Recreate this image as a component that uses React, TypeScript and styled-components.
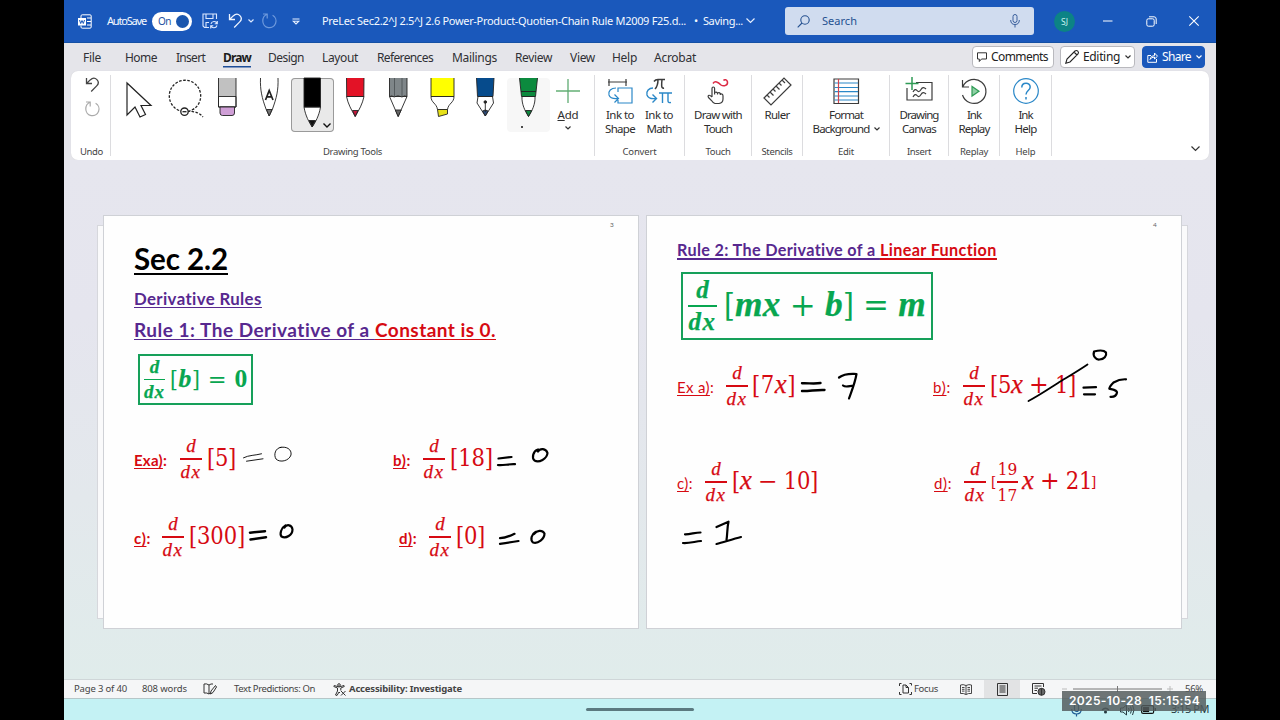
import React, { useLayoutEffect, useRef, useState } from "react";
import styled, { createGlobalStyle } from "styled-components";

const UI = `"Noto Sans", "Open Sans", sans-serif`;
const BODY = `Lato, "Open Sans", sans-serif`;
const MATH = `"Liberation Serif", serif`;
const FIGURES = `"DejaVu Serif Condensed", "DejaVu Serif", serif`;

const Global = createGlobalStyle`
  * { box-sizing: border-box; }
  body { margin: 0; background: #000; overflow: hidden; font-family: ${UI}; color: #2b2b2b; }
  svg { display: block; flex: none; overflow: visible; }
`;

/* ---------- text that spreads evenly over a given width ---------- */

const FitText = styled.span<{ $w: number }>`
  display: block;
  flex: none;
  width: ${(p) => p.$w}px;
  white-space: pre;
`;

function Fit({ w, children, className }: { w: number; children: React.ReactNode; className?: string }) {
  const ref = useRef<HTMLSpanElement>(null);
  const [spacing, setSpacing] = useState(0);
  useLayoutEffect(() => {
    const el = ref.current;
    if (!el) return;
    const n = (el.textContent || "").length;
    setSpacing((w - el.getBoundingClientRect().width) / Math.max(1, n));
  }, [w]);
  return (
    <FitText $w={w} className={className}>
      <span ref={ref} style={{ letterSpacing: spacing }}>
        {children}
      </span>
    </FitText>
  );
}

/* ---------- frame ---------- */

const Screen = styled.div`
  width: 1280px;
  height: 720px;
  padding: 0 64px;
  background: #000;
`;
const Window = styled.div`
  height: 720px;
  display: flex;
  flex-direction: column;
  background: #e5e5ea;
  overflow: hidden;
`;
const Slot = styled.div<{ $ml?: number; $mt?: number }>`
  flex: none;
  margin-left: ${(p) => p.$ml || 0}px;
  margin-top: ${(p) => p.$mt || 0}px;
`;

/* ---------- title bar ---------- */

const TitleBar = styled.header`
  height: 43px;
  flex: none;
  display: flex;
  align-items: center;
  background: #1a58bb;
  border-bottom: 1px solid #1450a4;
  color: #f4f8ff;
  font-size: 11px;
  line-height: 16px;
`;
const Toggle = styled.div`
  width: 40px;
  height: 19px;
  margin-left: 6px;
  border-radius: 10px;
  background: #fff;
  color: #1a4f9f;
  display: flex;
  align-items: center;
  justify-content: space-between;
  padding: 0 3px 0 6px;
  font-size: 10px;
`;
const Knob = styled.i`
  width: 13px;
  height: 13px;
  border-radius: 50%;
  background: #1a56ae;
`;
const SearchBox = styled.div`
  width: 249px;
  height: 28px;
  margin-left: 30px;
  border-radius: 3px;
  background: #d0dcef;
  color: #24508f;
  display: flex;
  align-items: center;
  padding: 0 14px 0 12px;
`;
const Avatar = styled.div`
  width: 21px;
  height: 21px;
  margin-left: 20px;
  border-radius: 50%;
  background: #0c8385;
  color: #c8f2ee;
  font-size: 8.5px;
  line-height: 21px;
  text-align: center;
`;

/* ---------- tabs ---------- */

const TabRow = styled.nav`
  height: 28px;
  flex: none;
  display: flex;
  align-items: center;
  padding-left: 19px;
  font-size: 12px;
  line-height: 18px;
  color: #303034;
`;
const Tab = styled.div<{ $ml: number; $active?: boolean }>`
  margin-left: ${(p) => p.$ml}px;
  height: 17px;
  font-weight: ${(p) => (p.$active ? 700 : 400)};
  color: ${(p) => (p.$active ? "#1c1c1c" : "inherit")};
  box-shadow: ${(p) => (p.$active ? "0 1.5px 0 #1c4c97" : "none")};
`;
const Pill = styled.div<{ $w: number; $ml: number; $primary?: boolean }>`
  width: ${(p) => p.$w}px;
  height: 22px;
  margin-left: ${(p) => p.$ml}px;
  display: flex;
  align-items: center;
  gap: 4px;
  padding: 0 4px;
  border-radius: 4px;
  border: 1px solid ${(p) => (p.$primary ? "#1a58bb" : "#b9b9be")};
  background: ${(p) => (p.$primary ? "#1a58bb" : "#fff")};
  color: ${(p) => (p.$primary ? "#fff" : "#222")};
`;

/* ---------- ribbon ---------- */

const Ribbon = styled.section`
  height: 89px;
  flex: none;
  margin: 0 7px;
  border-radius: 7px;
  background: #fff;
  display: flex;
  box-shadow: 0 0 1px #c9c9d0;
`;
const Group = styled.div<{ $w: number }>`
  width: ${(p) => p.$w}px;
  height: 81px;
  margin-top: 4px;
  flex: none;
  display: flex;
  flex-direction: column;
  justify-content: space-between;
  border-right: 1px solid #dcdcdf;
`;
const GroupBody = styled.div`
  display: flex;
  justify-content: center;
  padding-top: 3px;
`;
const GroupName = styled.div`
  display: flex;
  justify-content: center;
  height: 13px;
  margin-bottom: -2px;
  font-size: 9.5px;
  line-height: 13px;
  color: #444;
`;
const Tools = styled.div`
  display: flex;
  padding: 3px 0 0 7px;
`;
const Tool = styled.div<{ $w?: number; $state?: "selected" | "hover" }>`
  position: relative;
  width: ${(p) => p.$w || 43}px;
  height: 54px;
  flex: none;
  display: flex;
  justify-content: center;
  border-radius: 4px;
  background: ${(p) => (p.$state === "selected" ? "#e9e9e9" : p.$state === "hover" ? "#f7f7f7" : "none")};
  box-shadow: ${(p) => (p.$state === "selected" ? "inset 0 0 0 1px #9a9a9a" : "none")};
`;
/* small marks laid over the lower corner of a pen */
const ToolMark = styled.div<{ $left: number; $top: number }>`
  position: absolute;
  left: ${(p) => p.$left}px;
  top: ${(p) => p.$top}px;
`;
const Dot = styled.i`
  display: block;
  width: 2px;
  height: 2px;
  border-radius: 50%;
  background: #111;
`;
const RButton = styled.div<{ $w: number }>`
  width: ${(p) => p.$w}px;
  flex: none;
  display: flex;
  flex-direction: column;
  align-items: center;
  font-size: 11.5px;
  line-height: 14px;
  color: #2e2e2e;
`;
const Caption = styled.div`
  display: flex;
  flex-direction: column;
  align-items: center;
  margin-top: 4px;
`;
const CaptionLine = styled.div`
  display: flex;
  align-items: center;
  gap: 4px;
`;
const RibbonEnd = styled.div`
  flex: 1;
  display: flex;
  justify-content: flex-end;
  align-items: flex-end;
  padding: 0 9px 9px 0;
`;

/* ---------- document ---------- */

const Workspace = styled.main`
  height: 519px;
  flex: none;
  position: relative;
  display: flex;
  padding: 56px 0 0 34px;
  background: linear-gradient(180deg, #e6e6ee 0%, #e5e5ee 30%, #e3e8ec 65%, #e0eceb 100%);
`;
const Edge = styled.div`
  width: 6px;
  height: 392px;
  margin-top: 10px;
  background: #fafafb;
  box-shadow: 0 0 0 1px #d6d7dc;
`;
const Page = styled.article<{ $ml?: number }>`
  position: relative;
  width: 534px;
  height: 412px;
  margin-left: ${(p) => p.$ml || 0}px;
  padding-left: 30px;
  background: #fefefe;
  box-shadow: 0 0 0 1px #cfd1d6;
`;
const PageNo = styled.div`
  height: 10px;
  padding: 5px 0 0 476px;
  font: 6.5px/8px ${BODY};
  color: #666;
`;
const Heading = styled.div<{ $size: number; $lh: number; $mt: number; $line: number }>`
  display: flex;
  margin-top: ${(p) => p.$mt}px;
  height: ${(p) => p.$lh}px;
  font: 700 ${(p) => p.$size}px/${(p) => p.$lh}px ${BODY};
  text-decoration: underline;
  text-decoration-thickness: ${(p) => p.$line}px;
  text-underline-offset: ${(p) => p.$line + 0.6}px;
  text-decoration-skip-ink: none;
`;
const Black = styled(Fit)`color: #000; text-decoration: inherit;`;
const Purple = styled(Fit)`color: #57288f; text-decoration: inherit;`;
const Red = styled(Fit)`color: #d60a12; text-decoration: inherit;`;

const RuleBox = styled.div<{ $w: number; $h: number; $mt: number; $b: number }>`
  width: ${(p) => p.$w}px;
  height: ${(p) => p.$h}px;
  margin: ${(p) => p.$mt}px 0 0 4px;
  border: ${(p) => p.$b}px solid #16a05a;
  display: flex;
  align-items: center;
  padding-left: 4px;
  color: #08a650;
  i, b { font-weight: 700; }
`;
const Examples = styled.div<{ $mt: number }>`
  display: flex;
  align-items: center;
  height: 46px;
  margin-top: ${(p) => p.$mt}px;
  color: #d60a12;
`;
const Label = styled.div<{ $ml?: number; $bold?: boolean }>`
  display: flex;
  margin: 2px 0 0 ${(p) => p.$ml || 0}px;
  font: ${(p) => (p.$bold ? 700 : 400)} 15px/20px ${BODY};
  u { text-underline-offset: 2px; text-decoration-thickness: 1.3px; text-decoration-skip-ink: none; }
`;
const FracBox = styled.div<{ $ml: number; $size: number; $w: number }>`
  flex: none;
  width: ${(p) => p.$w}px;
  margin-left: ${(p) => p.$ml}px;
  display: flex;
  flex-direction: column;
  align-items: center;
  font-family: ${MATH};
  font-size: ${(p) => p.$size}px;
  line-height: ${(p) => p.$size - 2}px;
  -webkit-text-stroke: 0.25px currentColor;
`;
const Num = styled.div<{ $h: number }>`height: ${(p) => p.$h}px;`;
const Den = styled.div<{ $h: number }>`height: ${(p) => p.$h}px; padding-top: 3px;`;
const Bar = styled.div<{ $t: number }>`
  width: 100%;
  height: ${(p) => p.$t}px;
  background: currentColor;
`;
const Figures = styled.span`
  font-family: ${FIGURES};
  font-size: 0.9em;
  -webkit-text-stroke: 0;
`;
const Op = styled.span`
  font-family: "DejaVu Serif", serif;
  font-stretch: normal;
`;
const Expr = styled.div<{ $ml: number; $size?: number; $up?: number }>`
  flex: none;
  margin: 0 0 ${(p) => p.$up ?? 2}px ${(p) => p.$ml}px;
  font-family: ${FIGURES};
  font-stretch: condensed;
  font-size: ${(p) => p.$size || 23.5}px;
  line-height: 30px;
  i, b { font-family: ${MATH}; font-size: 1.14em; line-height: 1; }
  i { -webkit-text-stroke: 0.25px currentColor; }
`;

type FracProps = {
  ml: number; w?: number; size?: number; t?: number; bw?: number;
  top?: React.ReactNode; bottom?: React.ReactNode;
};
function Frac({ ml, w = 22, size = 19, t = 1.6, top = <i>d</i>, bottom = <i>dx</i>, bw = 21 }: FracProps) {
  const h = size + 2;
  return (
    <FracBox $ml={ml} $size={size} $w={w}>
      <Num $h={h}>{top}</Num>
      <Bar $t={t} />
      <Den $h={h}>
        <Fit w={bw}>{bottom}</Fit>
      </Den>
    </FracBox>
  );
}

const InkLayer = styled.svg`
  position: absolute;
  left: 0;
  top: 0;
  pointer-events: none;
`;

/* ---------- status and task bar ---------- */

const Status = styled.footer`
  height: 20px;
  flex: none;
  display: flex;
  align-items: center;
  background: #f5f6f7;
  border-top: 1px solid #cfd6d8;
  border-bottom: 1.5px solid #b6c6c8;
  font-size: 9.5px;
  line-height: 14px;
  color: #444;
`;
const ViewBtn = styled.div`
  width: 36px;
  height: 18px;
  margin-left: 12px;
  background: #e2e3e4;
  display: flex;
  align-items: center;
  justify-content: center;
`;
const Taskbar = styled.div`
  position: relative;
  height: 21px;
  flex: none;
  display: flex;
  align-items: center;
  background: #c4f2f4;
  font-size: 11px;
  line-height: 16px;
  color: #24393f;
`;
const HomeBar = styled.div`
  width: 108px;
  height: 3px;
  flex: none;
  margin: 0 377px 0 522px;
  border-radius: 2px;
  background: #5b7a80;
`;
const Clock = styled(Slot)`
  padding-bottom: 2px;
`;
const Stamp = styled.div`
  position: absolute;
  left: 998px;
  top: -8px;
  width: 144px;
  height: 20px;
  padding-left: 7px;
  background: rgba(84, 92, 93, 0.84);
  color: #fff;
  font: 600 12px/20px Inter, sans-serif;
`;

/* ---------- drawings ---------- */

const Chev = ({ s = 6, c = "#333", w = 1.2 }: { s?: number; c?: string; w?: number }) => (
  <svg width={s} height={s / 2 + 1} viewBox={`0 0 ${s} ${s / 2 + 1}`} fill="none" stroke={c} strokeWidth={w}>
    <path d={`M.5 .5L${s / 2} ${s / 2}L${s - 0.5} .5`} />
  </svg>
);

const UndoIcon = ({ c }: { c: string }) => (
  <svg width="15" height="16" viewBox="0 0 15 16" fill="none" stroke={c} strokeWidth="1.3">
    <path d="M1.500 1V6.500H7M1.800 6.200L5.200 2.900C7.500 .8 10.200 .9 11.900 2.600C13.700 4.500 13.600 7 11.700 8.900L6.200 14.500" />
  </svg>
);
const RedoIcon = ({ c }: { c: string }) => (
  <svg width="15" height="16" viewBox="0 0 15 16" fill="none" stroke={c} strokeWidth="1.2">
    <path d="M1 1H5.200V5.400M5 1.300C2.400 2.400 .8 4.800 .8 8A6.600 6.600 0 1 0 10.600 2.300" />
  </svg>
);

const pens: Record<string, React.ReactNode> = {
  eraser: (
    <>
      <path d="M4.500 0V29H22V0" fill="#c1c1c1" stroke="none" />
      <path d="M4.500 18.500H22V29H4.500Z" fill="#fff" />
      <path d="M4.500 0V29H22V0" fill="none" />
      <path d="M6 29H20.500V35Q20.500 37.500 18 37.500H8.500Q6 37.500 6 35Z" fill="#cf9fd6" />
    </>
  ),
  text: (
    <>
      <path d="M4.500 0C4 12 6 20 10 31L13.200 38L16.500 31C20.500 20 22.500 12 22 0" fill="#fff" />
      <path d="M10.500 31.500L13.200 38L16 31.500Z" fill="#777" />
      <path d="M9.500 22L13.200 12.500L17 22M10.800 18.800H15.600" fill="none" strokeWidth="1.7" />
    </>
  ),
  black: (
    <>
      <path d="M5 29H21.500C20 38 16.500 44 13.200 49C10 44 6.500 38 5 29Z" fill="#fff" />
      <path d="M5 0H21.500V29H5Z" fill="#000" />
      <path d="M10 42.500H16.500L13.200 49Z" fill="#111" />
    </>
  ),
  red: (
    <>
      <path d="M4.500 18.500H22C20.500 26 17 32 13.200 38.500C9.500 32 6 26 4.500 18.500Z" fill="#fff" />
      <path d="M4.500 0L4.700 18.500H21.800L22 0" fill="#e31226" />
      <path d="M10.500 32.500H16L13.200 38.500Z" fill="#c4143a" />
    </>
  ),
  pencil: (
    <>
      <path d="M4.500 18.500H22L13.200 38.500Z" fill="#fff" />
      <path d="M4.500 0V18.500Q7 16.500 9 19Q13 16.500 17 19Q19.500 16.500 22 18.500V0" fill="#7f8689" />
      <path d="M9.500 0V18M17 0V18" stroke="#4f5558" />
      <path d="M10.300 32H16.200L13.200 38.500Z" fill="#666" />
    </>
  ),
  highlighter: (
    <>
      <path d="M2 18.500H25C25 25 19.500 25 18.500 31.500H8.500C7.500 25 2 25 2 18.500Z" fill="#fff" />
      <path d="M2 0V18.500H25V0" fill="#ffff00" />
      <path d="M8.500 31.500H18.500V36L9.500 38.500Z" fill="#e6e018" />
    </>
  ),
  fountain: (
    <>
      <path d="M6 18.500H20.500L21.500 25L13.300 38L5 25Z" fill="#fff" />
      <path d="M4.500 0L5.500 18.500H21L22 0" fill="#064b8c" />
      <path d="M10.500 33L13.300 38L16 33L13.300 32Z" fill="#2c4a78" />
      <path d="M13.300 24V34" />
      <circle cx="13.300" cy="24" r="1.300" fill="#222" />
    </>
  ),
  green: (
    <>
      <path d="M7 18.500H20C20.500 26 17 33 13.500 38.500C10 33 6.500 26 7 18.500Z" fill="#fff" />
      <path d="M4.500 0L6.500 18.500H20.500L22.500 0" fill="#0c8a3e" />
      <path d="M6 13.500H21" />
      <path d="M10.500 32.500H16.700L13.500 38.500Z" fill="#0c8a3e" />
    </>
  ),
};
const Pen = ({ kind }: { kind: string }) => (
  <svg width="27" height="50" viewBox="0 0 27 50" stroke="#222" strokeWidth="0.9">
    {pens[kind]}
  </svg>
);

const ico = { width: 26, height: 26, viewBox: "0 0 26 26", fill: "none", strokeWidth: 1.2 };
const BLUE = "#2b88c8";
const DARK = "#3c3c3c";

const InkShape = () => (
  <svg {...ico}>
    <path d="M2 1V8M19 1V8M1 4H20" stroke={DARK} />
    <path d="M11 14V10H25V25H11V22M9 10C4 10 1 13 2 17C3 20 6 21 11 20.500M7.500 16.500L11.500 20.500L7.500 24.500" stroke={BLUE} />
  </svg>
);
const InkMath = () => (
  <svg {...ico}>
    <path d="M8 3.500C9 2 10 1.500 12 1.500H19M12 1.500C12 6 11 9 9 11M16 1.500C15.500 6 15 11 18 10" stroke={DARK} strokeWidth="1.500" />
    <path d="M7 10C3 10 0 13 1 17C2 20 6 21 10 20.500M6.500 16.500L10.500 20.500L6.500 24.500M13 15H26M16.500 15V25M22 15V23Q22 25 25 24.500" stroke={BLUE} strokeWidth="1.400" />
  </svg>
);
const TouchIcon = () => (
  <svg {...ico} stroke={DARK}>
    <path d="M7 19V10.500Q7 9 8.300 9Q9.600 9 9.600 10.500V16.500V14.500Q11.400 13.500 12.500 15V16.500V15Q14.400 14 15.300 15.600V17V16Q18 15.500 18 18V21Q18 25 14 25.500H10Q8 25 6.500 22.500L3.500 19.500Q2.500 18 4 17.300Q5 17 7 19" />
    <path d="M8 5.500C10 2.500 13 4 16 7C19 9 23 7 22.500 4C22 1.500 19.500 1 18.500 2.500" stroke="#dc2b45" strokeWidth="1.500" />
  </svg>
);
const RulerIcon = () => (
  <svg {...ico} stroke={DARK}>
    <path d="M0 20L20 0L27 7L7 27ZM3 17L5.500 19.500M6 14L9.500 17.500M9 11L11.500 13.500M12 8L15.500 11.500M15 5L17.500 7.500M18 2L21 5" />
  </svg>
);
const FormatIcon = () => (
  <svg {...ico}>
    <path d="M1 1H25.500V25.500H1Z" stroke={DARK} />
    <path d="M1.500 5H25M1.500 9.500H25M1.500 13.700H25M1.500 18H25M1.500 22H25" stroke={BLUE} />
    <path d="M5.500 1V25" stroke="#d0454f" />
  </svg>
);
const CanvasIcon = () => (
  <svg {...ico} stroke={DARK}>
    <path d="M10 4.500H26V22H1V10" />
    <path d="M7 14Q9 10 11 12.500T15 11.500T20 11M7 19Q9 15 11 17.500T15 16.500T20 16" />
    <path d="M-.5 5.500H12.500M6 -1V12" stroke="#2f9b55" strokeWidth="1.500" />
  </svg>
);
const ReplayIcon = () => (
  <svg {...ico} stroke={DARK}>
    <path d="M1.500 2V9H8M2 8.500A12 12 0 1 1 1.500 17" />
    <path d="M11 8.500V18L18 13.200Z" stroke="#2f9b55" fill="#8fd0a5" />
  </svg>
);
const HelpIcon = () => (
  <svg {...ico} stroke={BLUE}>
    <circle cx="13" cy="13" r="12.300" />
    <path d="M8.800 9.500C8.800 4 17.200 4 17.200 9C17.200 12.500 13 12.500 13 16.500M13 19V21.500" strokeWidth="1.500" />
  </svg>
);

/* handwriting over the two pages, in window coordinates */
const Ink = () => (
  <InkLayer width="1152" height="519" viewBox="64 160 1152 519" fill="none" stroke="#000" strokeWidth="2.200" strokeLinecap="round" strokeLinejoin="round">
    <g strokeWidth="0.900">
      <path d="M243.500 457.800C249 455 255 455.500 261.500 453.800M246.500 461.200L263 458.800" />
      <path d="M281 447.300C275 448 273.500 455 276 459C280 463 289 461 291 455C292 449 286 446 280 447.500" />
    </g>
    <path d="M250 532.700L265 531.200M250.500 539.500L266 537.200" strokeWidth="2.500" />
    <path d="M285.500 525.500C281 528 279.500 534 281.500 536.500C286 539 292.500 535 292.500 529.500C292 524.500 286.500 524 284.500 527.500" />
    <path d="M498.500 458.500L511.500 457M498 465C502 466 509 463.700 515 464.200" />
    <path d="M538 449.500C533 451 531.500 458 534.500 460.500C539 463 547 459 547.500 453C546 448 540 448 538 451.500" />
    <path d="M500 538.200C505 538 510 536 514.500 533.800M500 543.800C506 543 513 542 518.500 541" />
    <path d="M535.500 532C531.500 534 530 540 533 542.500C538 544 544.500 539 544.500 533.500C542 529.500 537 530.500 534 534" />
    <path d="M802 383.300C808 383 815 384 820.500 383M802 391C809 391.300 817 389.500 824.500 390" strokeWidth="2.400" />
    <path d="M839 377.500C845 373 851 374 856.500 374C855 383 852 390 849 398.500M843 385.500C846 388 850 385.500 853.500 385.500" />
    <path d="M1028.500 401C1040 395 1050 388 1058 383S1078 371 1087.500 364.500" strokeWidth="1.800" />
    <path d="M1094 352C1092.500 356 1096 360 1099.500 359.500C1104 359.500 1107 356 1106 352.500C1104 350 1098 350.500 1094 351.500" />
    <path d="M1083.500 387.700L1096 387.200M1084 394.300H1095" />
    <path d="M1126 379.300C1121 379 1117 380.500 1113.500 382.500C1111.500 384.500 1109.500 387 1109.300 388.700C1112 389.500 1117 390 1117 392.500C1116.500 395.500 1114 397 1110.500 396.800" />
    <path d="M685 534.300C690 534.500 695 532.500 700.500 532.500M683 543C689 543.500 695 541.500 701 541M716.500 527L728.500 521.700C727 528 727.500 534 726.500 540M716.500 544C724 542 733 539 741 537" />
  </InkLayer>
);

const tabs: [string, number, number][] = [
  ["File", 0, 18], ["Home", 24, 32], ["Insert", 19, 29], ["Draw", 18, 28], ["Design", 17, 36],
  ["Layout", 18, 36], ["References", 19, 56], ["Mailings", 19, 45], ["Review", 18, 37],
  ["View", 18, 25], ["Help", 17, 25], ["Acrobat", 17, 42],
];

export default function App() {
  return (
    <Screen>
      <Global />
      <Window>
        <TitleBar>
          <Slot $ml={14}>
            <svg width="14" height="15" viewBox="0 0 14 15" fill="none" stroke="#fff" strokeWidth="1">
              <path d="M3 4V2Q3 .8 4.200 .8H12Q13.200 .8 13.200 2V13Q13.200 14.200 12 14.200H4.200Q3 14.200 3 13V11.500M9 4H13M9 7.500H13M9 11H13" />
              <rect x="0" y="4" width="8" height="7.500" fill="#fff" stroke="none" />
              <path d="M1.500 6L2.700 9.500L4 6.500L5.300 9.500L6.500 6" stroke="#1a58bb" />
            </svg>
          </Slot>
          <Slot $ml={15}><Fit w={39}>AutoSave</Fit></Slot>
          <Toggle><Fit w={13}>On</Fit><Knob /></Toggle>
          <Slot $ml={10}>
            <svg width="16" height="16" viewBox="0 0 16 16" fill="none" stroke="#dbe8ff" strokeWidth="1.100">
              <path d="M7 14.500H2.500L1 13V1H14.500V6M4 1V5.500H11V1M4 14V9.500H7" />
              <path d="M9 11C9.500 8 14 7.500 15 10.500M15.300 8V10.700H12.700M15 12.500C14 15.500 10 15.500 9 13M8.700 15.500V12.800H11.300" />
            </svg>
          </Slot>
          <Slot $ml={10}><UndoIcon c="#eef4ff" /></Slot>
          <Slot $ml={5}><Chev c="#dbe8ff" /></Slot>
          <Slot $ml={8}><RedoIcon c="#6f9add" /></Slot>
          <Slot $ml={15}>
            <svg width="8" height="7" viewBox="0 0 8 7" fill="none" stroke="#e6efff" strokeWidth="1.100"><path d="M.5 1H7.500M1.200 3.200L4 6L6.800 3.200Z" /></svg>
          </Slot>
          <Slot $ml={22}><Fit w={364}>PreLec Sec2.2^J 2.5^J 2.6 Power-Product-Quotien-Chain Rule M2009 F25.d...</Fit></Slot>
          <Slot $ml={8}><Fit w={49}>•  Saving...</Fit></Slot>
          <Slot $ml={3}><Chev s={9} c="#e6efff" /></Slot>
          <SearchBox>
            <svg width="13" height="13" viewBox="0 0 13 13" fill="none" stroke="#24508f" strokeWidth="1.100"><circle cx="8" cy="5" r="4.200" /><path d="M5 8L.7 12.300" /></svg>
            <Slot $ml={12}><Fit w={35}>Search</Fit></Slot>
            <Slot $ml={153}>
              <svg width="10" height="14" viewBox="0 0 10 14" fill="none" stroke="#3a5f9c" strokeWidth="1"><rect x="3" y=".5" width="4" height="8" rx="2" /><path d="M.7 6Q.7 10.500 5 10.500T9.300 6M5 10.500V13.500" /></svg>
            </Slot>
          </SearchBox>
          <Avatar>SJ</Avatar>
          <Slot $ml={28}><svg width="10" height="10" viewBox="0 0 10 10" stroke="#fff"><path d="M0 5H9.500" /></svg></Slot>
          <Slot $ml={33}>
            <svg width="11" height="11" viewBox="0 0 11 11" fill="none" stroke="#fff"><rect x=".8" y="2.800" width="7.400" height="7.400" rx="1.500" /><path d="M3 .8H8Q10.200 .8 10.200 3V8" /></svg>
          </Slot>
          <Slot $ml={32}><svg width="10" height="10" viewBox="0 0 10 10" stroke="#fff" strokeWidth="1.100"><path d="M.3 .3L9.700 9.700M9.700 .3L.3 9.700" /></svg></Slot>
        </TitleBar>

        <TabRow>
          {tabs.map(([name, ml, w]) => (
            <Tab key={name} $ml={ml} $active={name === "Draw"}><Fit w={w}>{name}</Fit></Tab>
          ))}
          <Pill $w={82} $ml={276}>
            <svg width="10" height="10" viewBox="0 0 10 10" fill="none" stroke="#333"><path d="M.5 .8H9.500V7H4.500L2.300 9.500V7H.5Z" /></svg>
            <Fit w={57}>Comments</Fit>
          </Pill>
          <Pill $w={75} $ml={6}>
            <svg width="14" height="14" viewBox="0 0 14 14" fill="none" stroke="#222" strokeWidth="1.100"><path d="M.8 13.200L2 9L10 1Q11.500 0 12.800 1.200T13 4L5 12ZM9 2L12 5" /></svg>
            <Fit w={37}>Editing</Fit>
            <Slot $ml={1}><Chev /></Slot>
          </Pill>
          <Pill $w={63} $ml={7} $primary>
            <svg width="11" height="11" viewBox="0 0 11 11" fill="none" stroke="#fff"><path d="M4 3.500H.8V10.300H9.500V7M3 7.500Q3.500 3.500 7.500 3.500V1L10.500 4.200L7.500 7V5Q4.500 5 3 7.500" /></svg>
            <Fit w={29}>Share</Fit>
            <Slot $ml={1}><Chev c="#fff" /></Slot>
          </Pill>
        </TabRow>

        <Ribbon>
          <Group $w={40}>
            <div>
              <Slot $ml={14} $mt={2}><UndoIcon c="#444" /></Slot>
              <Slot $ml={14} $mt={8}><RedoIcon c="#aaa" /></Slot>
            </div>
            <GroupName><Slot $ml={2}><Fit w={23}>Undo</Fit></Slot></GroupName>
          </Group>
          <Group $w={484}>
            <Tools>
              <Tool>
                <svg width="26" height="40" viewBox="0 0 26 40" fill="#fff" stroke="#222" strokeWidth="1.200"><path d="M0 5V37L8 29L13 39L18.500 36.500L14 27.500H24Z" /></svg>
              </Tool>
              <Tool $w={45}>
                <svg width="40" height="40" viewBox="0 0 40 40" fill="none" stroke="#222" strokeWidth="1.300">
                  <path d="M19 33.500A15.700 15.700 0 1 1 23 33.500C29 33 35 34 39 39" strokeDasharray="2.600 1.500" />
                  <circle cx="20.500" cy="33.700" r="3.700" fill="#fff" /><path d="M18.500 33.700H22.500" />
                </svg>
              </Tool>
              <Tool $w={42}><Pen kind="eraser" /></Tool>
              <Tool><Pen kind="text" /></Tool>
              <Tool $state="selected">
                <Pen kind="black" />
                <ToolMark $left={32} $top={45}><Chev s={8} c="#111" w={1.4} /></ToolMark>
              </Tool>
              <Tool><Pen kind="red" /></Tool>
              <Tool><Pen kind="pencil" /></Tool>
              <Tool $w={44}><Pen kind="highlighter" /></Tool>
              <Tool><Pen kind="fountain" /></Tool>
              <Tool $state="hover">
                <Pen kind="green" />
                <ToolMark $left={14} $top={48}><Dot /></ToolMark>
              </Tool>
              <RButton $w={36}>
                <svg {...ico} strokeWidth="1.300"><path d="M1 13H25" stroke="#4ba35f" /><path d="M13 1V25" stroke="#5fab72" /></svg>
                <Caption><Fit w={21}><u>A</u>dd</Fit><Slot $mt={4}><Chev /></Slot></Caption>
              </RButton>
            </Tools>
            <GroupName><Fit w={59}>Drawing Tools</Fit></GroupName>
          </Group>
          <Group $w={90}>
            <GroupBody>
              <RButton $w={39}><InkShape /><Caption><Fit w={28}>Ink to</Fit><Fit w={30}>Shape</Fit></Caption></RButton>
              <RButton $w={39}><InkMath /><Caption><Fit w={28}>Ink to</Fit><Fit w={25}>Math</Fit></Caption></RButton>
            </GroupBody>
            <GroupName><Fit w={34}>Convert</Fit></GroupName>
          </Group>
          <Group $w={67}>
            <GroupBody><RButton $w={60}><TouchIcon /><Caption><Fit w={48}>Draw with</Fit><Fit w={28}>Touch</Fit></Caption></RButton></GroupBody>
            <GroupName><Fit w={25}>Touch</Fit></GroupName>
          </Group>
          <Group $w={51}>
            <GroupBody><RButton $w={48}><RulerIcon /><Caption><Fit w={25}>Ruler</Fit></Caption></RButton></GroupBody>
            <GroupName><Fit w={31}>Stencils</Fit></GroupName>
          </Group>
          <Group $w={87}>
            <GroupBody>
              <RButton $w={80}><FormatIcon /><Caption><Fit w={34}>Format</Fit><CaptionLine><Fit w={57}>Background</Fit><Chev /></CaptionLine></Caption></RButton>
            </GroupBody>
            <GroupName><Fit w={16}>Edit</Fit></GroupName>
          </Group>
          <Group $w={59}>
            <GroupBody><RButton $w={50}><CanvasIcon /><Caption><Fit w={39}>Drawing</Fit><Fit w={34}>Canvas</Fit></Caption></RButton></GroupBody>
            <GroupName><Fit w={24}>Insert</Fit></GroupName>
          </Group>
          <Group $w={51}>
            <GroupBody><RButton $w={48}><ReplayIcon /><Caption><Fit w={14}>Ink</Fit><Fit w={31}>Replay</Fit></Caption></RButton></GroupBody>
            <GroupName><Fit w={28}>Replay</Fit></GroupName>
          </Group>
          <Group $w={52}>
            <GroupBody><RButton $w={48}><HelpIcon /><Caption><Fit w={14}>Ink</Fit><Fit w={22}>Help</Fit></Caption></RButton></GroupBody>
            <GroupName><Fit w={20}>Help</Fit></GroupName>
          </Group>
          <RibbonEnd><Chev s={9} /></RibbonEnd>
        </Ribbon>

        <Workspace>
          <Edge />
          <Page>
            <PageNo>3</PageNo>
            <Heading $size={29.5} $lh={36} $mt={15} $line={2.2}><Black w={94}>Sec 2.2</Black></Heading>
            <Heading $size={16.8} $lh={24} $mt={10} $line={1.3}><Purple w={128}>Derivative Rules</Purple></Heading>
            <Heading $size={19} $lh={26} $mt={6} $line={1.3}>
              <Purple w={241}>{"Rule 1: The Derivative of a "}</Purple><Red w={121}>Constant is 0.</Red>
            </Heading>
            <RuleBox $w={115} $h={51} $mt={11} $b={2}>
              <Frac ml={0} w={21} />
              <Expr $ml={5} $size={22.5}><Fit w={78}>[<i>b</i>] <Op>=</Op> <b>0</b></Fit></Expr>
            </RuleBox>
            <Examples $mt={31}>
              <Label $bold><Fit w={33}><u>Exa)</u>:</Fit></Label>
              <Frac ml={13} /><Expr $ml={5}><Fit w={29}>[5]</Fit></Expr>
              <Label $bold $ml={157}><Fit w={18}><u>b)</u>:</Fit></Label>
              <Frac ml={12} /><Expr $ml={5}><Fit w={43}>[18]</Fit></Expr>
            </Examples>
            <Examples $mt={32}>
              <Label $bold><Fit w={17}><u>c)</u>:</Fit></Label>
              <Frac ml={11} /><Expr $ml={5}><Fit w={56}>[300]</Fit></Expr>
              <Label $bold $ml={154}><Fit w={18}><u>d)</u>:</Fit></Label>
              <Frac ml={12} /><Expr $ml={5}><Fit w={29}>[0]</Fit></Expr>
            </Examples>
          </Page>
          <Page $ml={9}>
            <PageNo>4</PageNo>
            <Heading $size={16.2} $lh={22} $mt={13} $line={1.6}>
              <Purple w={203}>{"Rule 2: The Derivative of a "}</Purple><Red w={117}>Linear Function</Red>
            </Heading>
            <RuleBox $w={252} $h={68} $mt={11} $b={2.5}>
              <Frac ml={1} w={29} size={25} t={2} bw={28} />
              <Expr $ml={7} $size={31}><Fit w={202}>[<i>mx</i> <Op>+</Op> <i>b</i>] <Op>=</Op> <i>m</i></Fit></Expr>
            </RuleBox>
            <Examples $mt={23}>
              <Label><Fit w={37}><u>Ex a)</u>:</Fit></Label>
              <Frac ml={12} /><Expr $ml={4}><Fit w={44}>[7<i>x</i>]</Fit></Expr>
              <Label $ml={137}><Fit w={18}><u>b)</u>:</Fit></Label>
              <Frac ml={12} /><Expr $ml={5}><Fit w={86}>[5<i>x</i> <Op>+</Op> 1]</Fit></Expr>
            </Examples>
            <Examples $mt={50}>
              <Label><Fit w={16}><u>c)</u>:</Fit></Label>
              <Frac ml={12} /><Expr $ml={5}><Fit w={86}>[<i>x</i> <Op>−</Op> 10]</Fit></Expr>
              <Label $ml={116}><Fit w={18}><u>d)</u>:</Fit></Label>
              <Frac ml={12} />
              <Expr $ml={5} $size={15} $up={0}><Fit w={6}>[</Fit></Expr>
              <Frac ml={0} w={21} top={<Figures>19</Figures>} bottom={<Figures>17</Figures>} bw={20} />
              <Expr $ml={4}><Fit w={70}><i>x</i> <Op>+</Op> 21</Fit></Expr>
              <Expr $ml={-1} $size={15} $up={0}>]</Expr>
            </Examples>
          </Page>
          <Edge />
          <Ink />
        </Workspace>

        <Status>
          <Slot $ml={10}><Fit w={53}>Page 3 of 40</Fit></Slot>
          <Slot $ml={15}><Fit w={45}>808 words</Fit></Slot>
          <Slot $ml={16}>
            <svg width="14" height="12" viewBox="0 0 14 12" fill="none" stroke="#333"><path d="M6 2V11M6 2Q3.500 .3 1 1V10Q4 9.500 6 11Q7 10 8 10M6 2Q8 .5 10 1M12.500 2.500L8 8L7.500 11L10 9.500L13.500 4Z" /></svg>
          </Slot>
          <Slot $ml={17}><Fit w={81}>Text Predictions: On</Fit></Slot>
          <Slot $ml={18}>
            <svg width="14" height="13" viewBox="0 0 14 13" fill="none" stroke="#333"><circle cx="6" cy="2" r="1.300" /><path d="M.8 3.500L4.500 5V8L2.500 12L4 12.500L6 9L7 10M11.300 3.500L7.800 5V7.500M.8 3.500L1.200 2.500L6 4L11 2.500L11.300 3.500M8 8L12.500 12.500M12.500 8L8 12.500" /></svg>
          </Slot>
          <Slot $ml={2}><Fit w={113}><b>Accessibility: Investigate</b></Fit></Slot>
          <Slot $ml={437}>
            <svg width="13" height="12" viewBox="0 0 13 12" fill="none" stroke="#333"><path d="M.5 3V.5H2.500M.5 9V11.500H2.500M12.500 9V11.500H10.500M10.500 .5H12.500V2.500M4 2H7L9.500 4.500V10H4ZM7 2V4.500H9.500" /></svg>
          </Slot>
          <Slot $ml={2}><Fit w={24}>Focus</Fit></Slot>
          <Slot $ml={22}>
            <svg width="12" height="11" viewBox="0 0 12 11" fill="none" stroke="#333" strokeWidth=".9"><path d="M6 1.500V10.500M6 1.500Q3 0 .5 1V9.500Q3.500 9 6 10.500Q8.500 9 11.500 9.500V1Q9 0 6 1.500M2 3.500H4.500M2 5.300H4.500M2 7.100H4.500M7.500 3.500H10M7.500 5.300H10M7.500 7.100H10" /></svg>
          </Slot>
          <ViewBtn>
            <svg width="11" height="13" viewBox="0 0 11 13" fill="none" stroke="#333"><path d="M.5 .5H10.500V12.500H.5ZM2.500 3H8.500M2.500 5H8.500M2.500 7H8.500M2.500 9H8.500" /></svg>
          </ViewBtn>
          <Slot $ml={12}>
            <svg width="14" height="13" viewBox="0 0 14 13" fill="none" stroke="#333"><path d="M5 10.500H.5V.5H11.500V4M2.500 3H9.500M2.500 5.200H6M2.500 7.500H5" /><circle cx="9.500" cy="8.800" r="3.500" fill="#666" /><path d="M9.500 5.300V12.300" /></svg>
          </Slot>
          <Slot $ml={16}>
            <svg width="112" height="8" viewBox="0 0 112 8" stroke="#777"><path d="M0 4H5M105 4H111M108 1V7" stroke="#bbb" /><path d="M11 4H100M55.500 1V7" /></svg>
          </Slot>
          <Slot $ml={11}><Fit w={18}>56%</Fit></Slot>
        </Status>

        <Taskbar>
          <HomeBar />
          <svg width="11" height="14" viewBox="0 0 11 14" fill="none" stroke="#1d5c94" strokeWidth="1.200"><rect x="3.500" y=".5" width="4" height="8" rx="2" /><path d="M.7 6Q.7 11 5.500 11T10.300 6M5.500 11V13.500" /></svg>
          <Slot $ml={19}><svg width="9" height="8" viewBox="0 0 9 8" fill="none" stroke="#24393f" strokeWidth="1.200"><path d="M1 4Q4.500 .5 8 4" /><circle cx="4.500" cy="6" r=".9" fill="#24393f" /></svg></Slot>
          <Slot $ml={10}><svg width="15" height="12" viewBox="0 0 15 12" fill="none" stroke="#24393f"><path d="M.5 4H3L6.500 1V11L3 8H.5ZM8.500 4Q9.800 6 8.500 8M10.500 2.500Q12.500 6 10.500 9.500M12.500 1Q15.500 6 12.500 11" /></svg></Slot>
          <Slot $ml={6}><svg width="15" height="9" viewBox="0 0 15 9" fill="none" stroke="#111" strokeWidth="1.200"><rect x=".6" y=".6" width="12" height="7.800" rx="1.500" /><path d="M2.500 2.500H7.500V6.500H2.500Z" fill="#111" /><path d="M14.300 3V6" /></svg></Slot>
          <Clock $ml={15}><Fit w={38}>3:15 PM</Fit></Clock>
          <Stamp><Fit w={131}>2025-10-28  15:15:54</Fit></Stamp>
        </Taskbar>
      </Window>
    </Screen>
  );
}
